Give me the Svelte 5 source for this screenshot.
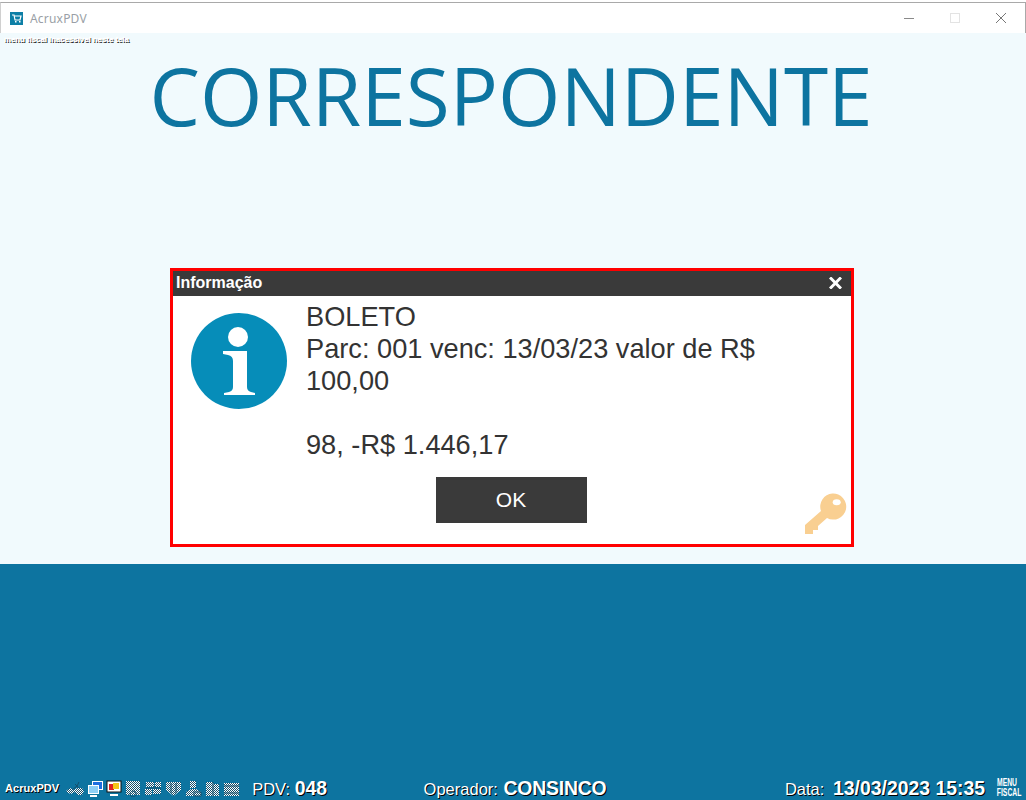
<script>
  const dimmed = [
    { id: 'a', w: 16, d: 'M1 1h14v14H1z', dark: 'M8 11a3 3 0 1 0 .1 0z' },
    { id: 'b', w: 18, d: 'M2 2h8v5H2zM11 2h6v5h-6zM1 9h7v6H1zM9 9h8v5H9z', dark: 'M2 8h15' },
    { id: 'c', w: 17, d: 'M1 2h15v8l-7.500 6L1 10z', dark: 'M6 3v10M11 3v10' },
    { id: 'd', w: 17, d: 'M5 1h6v7H5zM1 16v-4l5-3h5l5 3v4z', dark: 'M9 12h7v4H9z' },
    { id: 'e', w: 15, d: 'M1 2h7v14H1zM8 4h6v12H8z', dark: 'M8 2v14' },
    { id: 'f', w: 17, d: 'M1 3h15v13H1z', dark: 'M1 6h15M1 13h15' }
  ];
</script>

<div class="window">
  <header class="titlebar">
    <svg class="app-icon" width="13" height="13" viewBox="0 0 13 13">
      <rect width="13" height="13" fill="#0d7fa6" />
      <path d="M2 3h2l1 5h5l1-4H4.500" fill="none" stroke="#fff" stroke-width="1.200" />
      <rect x="5" y="9" width="1.500" height="1.500" fill="#fff" />
      <rect x="9" y="9" width="1.500" height="1.500" fill="#fff" />
    </svg>
    <span class="app-name">AcruxPDV</span>
    <div class="controls">
      <span class="ctl"><svg width="12" height="12"><path d="M1 6.500h10" stroke="#8a8a8a" /></svg></span>
      <span class="ctl"><svg width="12" height="12"><rect x="1.500" y="1.500" width="9" height="9" fill="none" stroke="#e3e3e3" /></svg></span>
      <span class="ctl"><svg width="12" height="12"><path d="M1 1l10 10M11 1L1 11" stroke="#777" /></svg></span>
    </div>
  </header>

  <main class="content">
    <div class="fiscal-note">menu fiscal inacessível neste tela</div>
    <h1>CORRESPONDENTE</h1>
  </main>

  <section class="bottom">
    <footer class="status">
      <div class="left">
        <strong class="brand">AcruxPDV</strong>
        <div class="tray">
          <svg width="18" height="16" viewBox="0 0 18 16">
            <defs>
              <pattern id="dots" width="2" height="2" patternUnits="userSpaceOnUse">
                <rect width="1" height="1" fill="#fff" />
                <rect x="1" y="1" width="1" height="1" fill="#fff" />
                <rect x="1" width="1" height="1" fill="#16506c" />
                <rect y="1" width="1" height="1" fill="#16506c" />
              </pattern>
            </defs>
            <path d="M0 11l4-3 4 2 3-2 5 0 2 3-2 4-4 0-3-3-4 2-3-1z" fill="url(#dots)" />
            <path d="M6 10l5-4 2-4M9 4l5 5" stroke="#16506c" fill="none" />
          </svg>
          <svg width="16" height="17" viewBox="0 0 16 17">
            <rect x="5.500" y="1.500" width="10" height="8" fill="#1f6fe0" stroke="#fff" />
            <rect x="1.500" y="5.500" width="10" height="8" fill="#8fd0f5" stroke="#fff" />
            <rect x="3" y="15" width="7" height="2" fill="#fff" />
          </svg>
          <svg width="16" height="17" viewBox="0 0 16 17">
            <rect x="1" y="1" width="14" height="11" fill="#fff" stroke="#111" />
            <rect x="3" y="4" width="5" height="6" fill="#e02020" />
            <rect x="7" y="3" width="6" height="6" fill="#f5c518" />
            <rect x="4" y="14" width="8" height="2" fill="#fff" />
          </svg>
          {#each dimmed as icon (icon.id)}
            <svg width={icon.w} height="17" viewBox="0 0 {icon.w} 17">
              <path d={icon.d} fill="url(#dots)" />
              <path d={icon.dark} fill="none" stroke="#16506c" />
            </svg>
          {/each}
        </div>
        <span class="field pdv">PDV: <b>048</b></span>
      </div>
      <span class="field operator">Operador: <b>CONSINCO</b></span>
      <div class="right">
        <span class="field date">Data: <b>13/03/2023 15:35</b></span>
        <span class="menu-fiscal">MENU<br />FISCAL</span>
      </div>
    </footer>
  </section>

  <div class="dialog">
    <div class="dialog-head">
      <span>Informação</span>
      <svg width="13" height="12" viewBox="0 0 13 12"><path d="M1 .5l11 11M12 .5l-11 11" stroke="#fff" stroke-width="3" /></svg>
    </div>
    <div class="dialog-body">
      <svg class="info" width="96" height="96" viewBox="0 0 96 96">
        <circle cx="48" cy="48" r="48" fill="#068db9" />
        <circle cx="47" cy="24" r="10" fill="#fff" />
        <path d="M32 38H56V74Q56 78 60 79L64 80V82H33V80L38 79Q42 78 42 74V48Q42 43 37 42L32 41z" fill="#fff" />
      </svg>
      <p class="msg">BOLETO<br />Parc: 001 venc: 13/03/23 valor de R$ 100,00<br /><br />98, -R$ 1.446,17</p>
    </div>
    <div class="dialog-actions"><button type="button">OK</button></div>
    <svg class="key" width="44" height="44" viewBox="0 0 44 44">
      <path d="M2 34L18 20A13 13 0 1 1 24 27L15 35V39H10V43H2z" fill="#f9cf91" />
      <ellipse cx="33.700" cy="11.300" rx="4" ry="3" fill="#fff" />
    </svg>
  </div>
</div>

<style>
  :global(body) {
    margin: 0;
    background: #fff;
  }

  .window {
    position: relative;
    box-sizing: border-box;
    width: 1026px;
    height: 800px;
    margin: 0;
    padding-top: 2px;
    display: flex;
    flex-direction: column;
    overflow: hidden;
    font-family: "Liberation Sans", Arial, sans-serif;
  }

  .titlebar {
    box-sizing: border-box;
    height: 31px;
    flex: none;
    display: flex;
    align-items: center;
    padding-left: 9px;
    background: #fff;
    border-top: 1px solid #a9a9a9;
    border-right: 1px solid #a9a9a9;
    border-left: 1px solid #d0d0d0;
  }

  .app-icon {
    margin-top: 1px;
  }

  .app-name {
    margin-left: 7px;
    font-family: "Noto Sans", sans-serif;
    font-size: 12px;
    color: #9a9fa6;
    letter-spacing: 0.2px;
  }

  .controls {
    margin-left: auto;
    display: flex;
    margin-right: 1px;
  }

  .ctl {
    width: 46px;
    height: 30px;
    display: flex;
    align-items: center;
    justify-content: center;
  }

  .content {
    box-sizing: border-box;
    height: 531px;
    flex: none;
    background: #f1fafd;
    padding-top: 3px;
  }

  .fiscal-note {
    margin-left: 4px;
    font-size: 7.800px;
    font-weight: 700;
    line-height: 7px;
    height: 7px;
    color: #fff;
    -webkit-text-stroke: 0.4px #fff;
    text-shadow: 1px 1px 0 #000;
  }

  h1 {
    margin: 6px 4px 0 0;
    text-align: center;
    font-family: "Open Sans", sans-serif;
    font-weight: 400;
    font-size: 80.2px;
    line-height: 92px;
    color: #0d74a0;
  }

  .bottom {
    flex: 1;
    display: flex;
    flex-direction: column;
    justify-content: flex-end;
    background: #0d74a0;
  }

  .status {
    height: 24px;
    display: grid;
    grid-template-columns: 1fr auto 1fr;
    align-items: center;
    color: #fff;
    text-shadow: 1px 1px 0 #000;
  }

  .left {
    display: flex;
    align-items: center;
    padding-left: 5px;
  }

  .brand {
    font-size: 11px;
    letter-spacing: 0.05px;
  }

  .tray {
    display: flex;
    align-items: center;
    gap: 3px;
    margin-left: 7px;
  }

  .tray svg {
    flex: none;
  }

  .field {
    font-size: 16.500px;
    white-space: nowrap;
  }

  .field b {
    font-size: 19.400px;
  }

  .pdv {
    margin-left: 12px;
  }

  .operator {
    margin-left: 4px;
  }

  .operator b {
    margin-left: 1px;
    letter-spacing: -0.2px;
  }

  .date b {
    margin-left: 4px;
  }

  .right {
    display: flex;
    justify-content: flex-end;
    align-items: center;
    padding-right: 4px;
  }

  .menu-fiscal {
    margin-left: 7px;
    width: 30px;
    font-size: 10px;
    line-height: 10px;
    text-align: center;
    font-weight: 700;
    transform: scaleX(0.68);
    text-shadow: none;
  }

  .dialog {
    position: absolute;
    left: 170px;
    top: 268px;
    box-sizing: border-box;
    width: 684px;
    height: 279px;
    border: 3px solid #f00;
    background: #fff;
    display: flex;
    flex-direction: column;
  }

  .dialog-head {
    height: 25px;
    box-sizing: border-box;
    flex: none;
    display: flex;
    align-items: center;
    justify-content: space-between;
    padding: 0 9px 1px 3px;
    background: #3a3a3a;
    color: #fff;
    font-size: 16px;
    font-weight: 700;
  }

  .dialog-body {
    display: flex;
    align-items: flex-start;
    padding: 17px 0 0 18px;
  }

  .info {
    flex: none;
  }

  .msg {
    margin: -12px 0 0 19px;
    width: 490px;
    font-size: 27.200px;
    line-height: 32px;
    color: #333;
  }

  .dialog-actions {
    display: flex;
    justify-content: center;
    margin-top: 16px;
    padding-right: 2px;
  }

  button {
    width: 151px;
    height: 46px;
    border: none;
    background: #3a3a3a;
    color: #fff;
    font-family: inherit;
    font-size: 21px;
  }

  .key {
    position: absolute;
    right: 4px;
    bottom: 9px;
  }
</style>
